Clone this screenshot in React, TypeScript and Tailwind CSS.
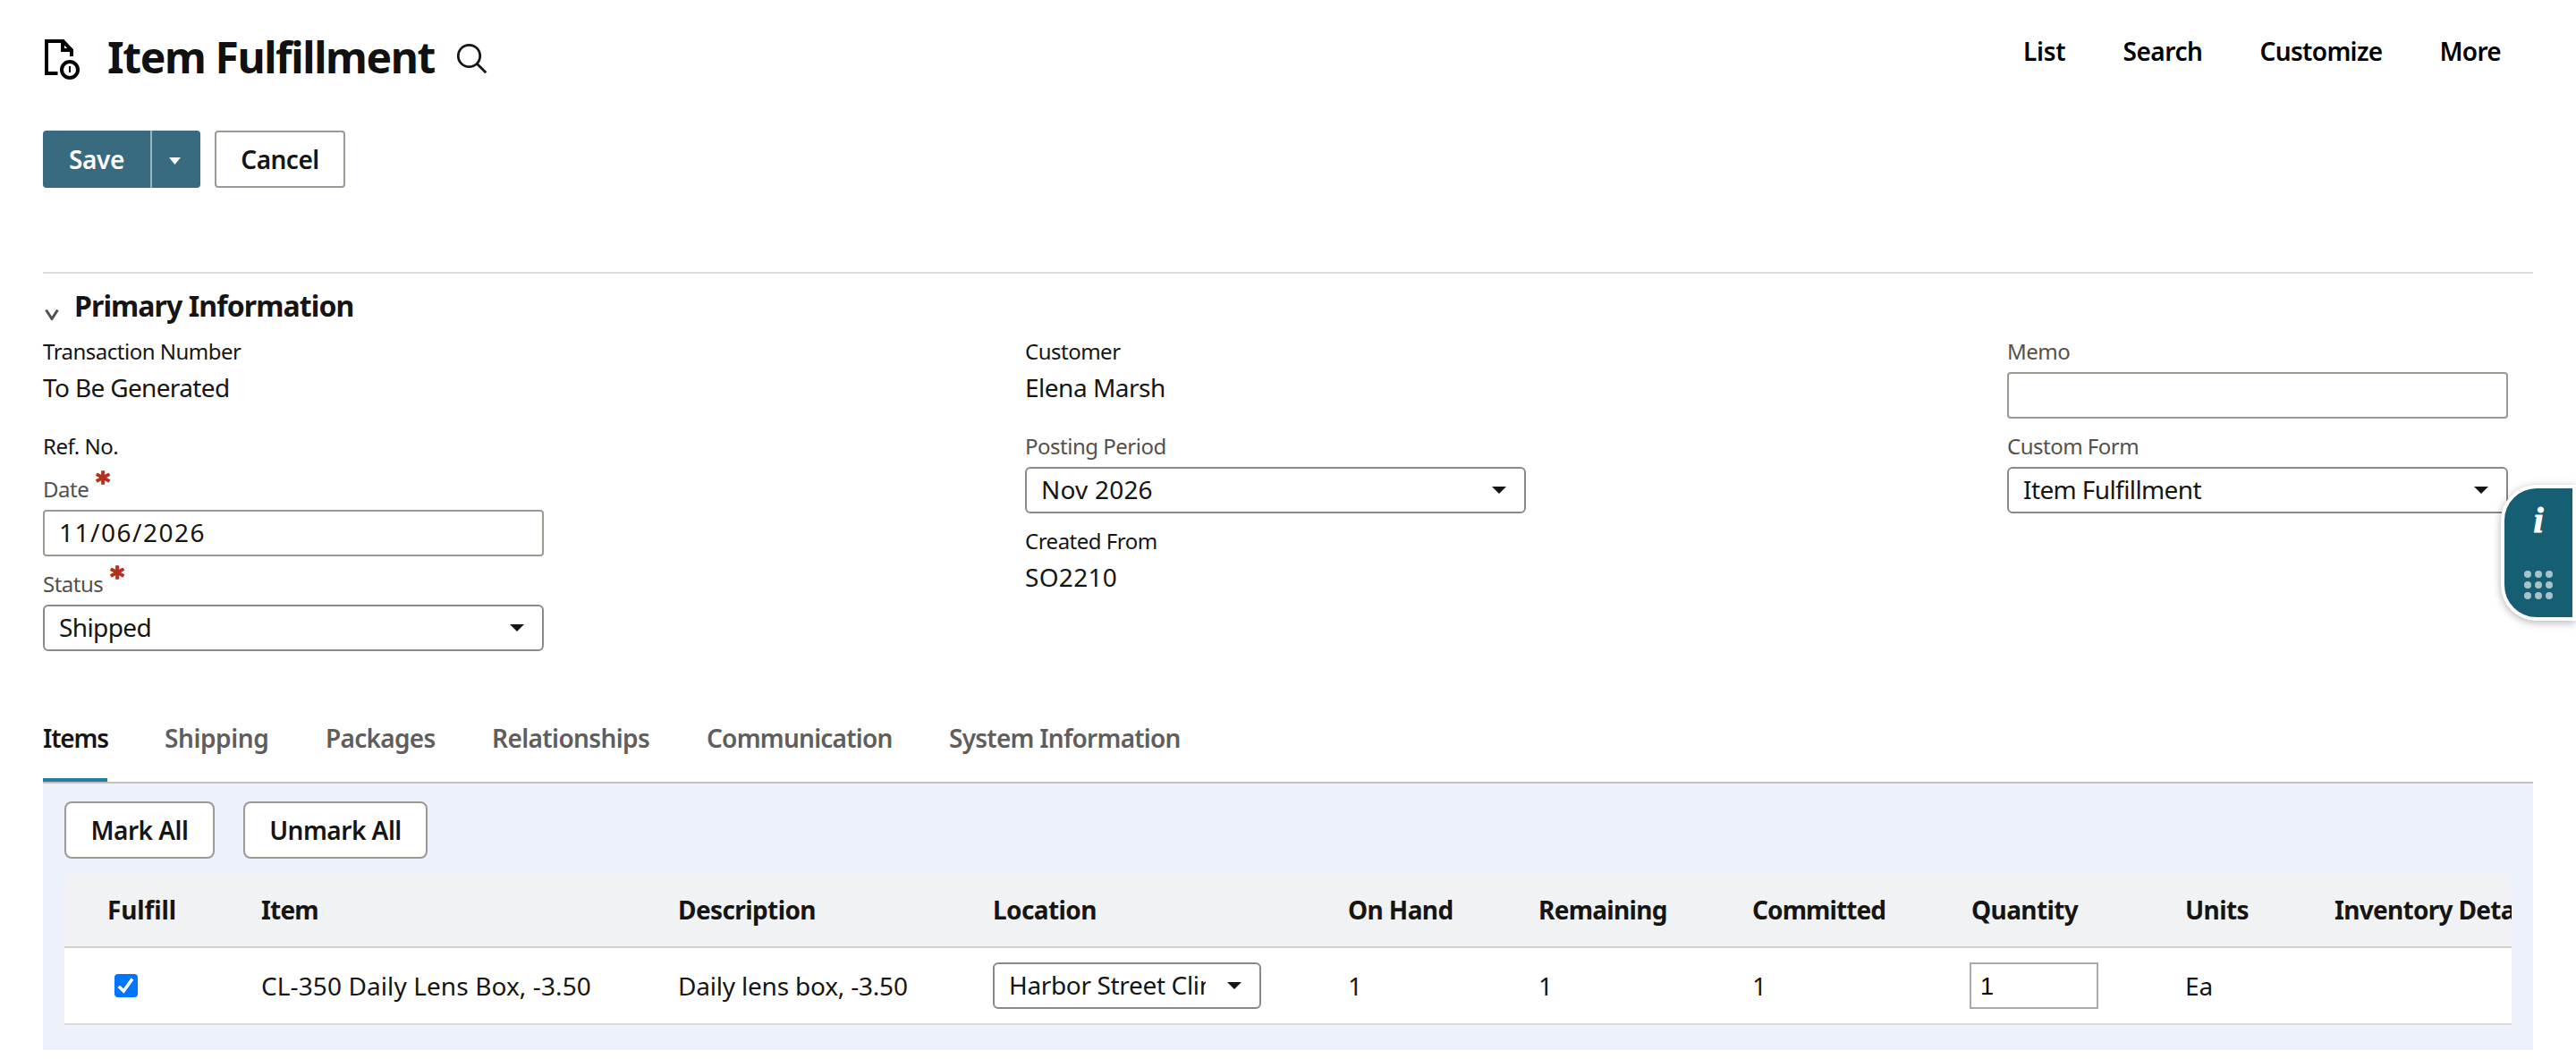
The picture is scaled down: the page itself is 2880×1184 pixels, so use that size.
import type { ReactNode } from "react";
import clsx from "clsx";

const NAV = [
  { label: "List", tracking: "tracking-[-0.2px]" },
  { label: "Search", tracking: "tracking-[-0.45px]" },
  { label: "Customize", tracking: "tracking-[-0.65px]" },
  { label: "More", tracking: "tracking-[-0.7px]" },
];

const TABS = [
  { label: "Items", style: "w-[72px] tracking-[-1.2px]" },
  { label: "Shipping", style: "w-[116px] tracking-[-0.4px]" },
  { label: "Packages", style: "w-[122px] tracking-[-0.7px]" },
  { label: "Relationships", style: "w-[176px] tracking-[-0.6px]" },
  { label: "Communication", style: "w-[207px] tracking-[-0.75px]" },
  { label: "System Information", style: "w-[260px] tracking-[-0.75px]" },
];

const COLUMNS = [
  { label: "Fulfill", tracking: "tracking-[-0.1px]" },
  { label: "Item", tracking: "tracking-[-0.8px]" },
  { label: "Description", tracking: "tracking-[-0.6px]" },
  { label: "Location", tracking: "tracking-[-0.6px]" },
  { label: "On Hand", tracking: "tracking-[-0.6px]" },
  { label: "Remaining", tracking: "tracking-[-0.7px]" },
  { label: "Committed", tracking: "tracking-[-0.9px]" },
  { label: "Quantity", tracking: "tracking-[-0.6px]" },
  { label: "Units", tracking: "tracking-[-0.6px]" },
  { label: "Inventory Detail", tracking: "tracking-[-0.7px]" },
];

const GRID =
  "grid grid-cols-[172px_466px_352px_397px_213px_239px_245px_239px_167px_300px] items-center pl-12";

function Caret({ className }: { className?: string }) {
  return (
    <svg viewBox="0 0 16 8" className={clsx("h-2 w-4 flex-none fill-current", className)}>
      <path d="M0 0h16L8 8z" />
    </svg>
  );
}

function RecordIcon() {
  return (
    <svg width="42" height="48" viewBox="0 0 42 48" fill="none" stroke="#000" strokeWidth="4">
      <path d="M16.500 40H4V4h18.500l9.500 10v7" />
      <path d="M22 4v10h11" />
      <circle cx="30" cy="36" r="9" />
      <path d="M30 32v7" strokeWidth="2" />
    </svg>
  );
}

function SearchIcon() {
  return (
    <svg width="36" height="36" viewBox="0 0 36 36" fill="none" stroke="#161513" strokeWidth="2.8">
      <circle cx="15.5" cy="15.5" r="12.2" />
      <path d="M24 24l10.3 10.3" />
    </svg>
  );
}

function Required() {
  return (
    <span className="-mt-2 ml-2 font-['DejaVu_Sans'] text-[30px] font-bold leading-8 tracking-normal text-[#b5301c] [-webkit-text-stroke:1.4px_#b5301c]">
      *
    </span>
  );
}

type FieldProps = { label: string; editable?: boolean; required?: boolean; children?: ReactNode };

function Field({ label, editable, required, children }: FieldProps) {
  return (
    <div className={children ? "h-[106px]" : "h-12"}>
      <div
        className={clsx(
          "flex h-8 text-2xl leading-8 tracking-[-0.5px]",
          editable ? "text-[#54504a]" : "text-[#161513]",
        )}
      >
        {label}
        {required && <Required />}
      </div>
      {children}
    </div>
  );
}

function Value({ children, tracking }: { children: ReactNode; tracking?: string }) {
  return (
    <div className={clsx("mt-1 text-[28px] leading-10", tracking ?? "tracking-[-0.65px]")}>{children}</div>
  );
}

function Input({ value, className }: { value?: string; className?: string }) {
  return (
    <div
      className={clsx(
        "mt-[7px] h-[52px] w-[560px] rounded-[4px] border-2 border-[#9e9892] bg-white pl-4 text-[28px] leading-[46px]",
        className,
      )}
    >
      {value}
    </div>
  );
}

function Select({ value, tracking }: { value: string; tracking?: string }) {
  return (
    <div className="mt-[7px] flex h-[52px] w-[560px] justify-between rounded-[6px] border-2 border-[#8a8a8a] bg-white pl-4 pr-5">
      <span className={clsx("text-[28px] leading-[46px]", tracking ?? "tracking-[-0.6px]")}>{value}</span>
      <Caret className="mt-5" />
    </div>
  );
}

function Button({ label, className }: { label: string; className: string }) {
  return (
    <div
      className={clsx(
        "flex h-16 items-center justify-center border-2 border-[#9e9892] bg-white text-[28px] font-semibold leading-10 tracking-[-0.5px]",
        className,
      )}
    >
      {label}
    </div>
  );
}

function Header() {
  return (
    <div className="flex h-14 items-start mt-[35px]">
      <div className="mt-[7px]">
        <RecordIcon />
      </div>
      <h1 className="ml-[30px] mt-px w-[389px] whitespace-nowrap text-5xl font-bold leading-[56px] tracking-[-1.4px] text-[#111]">
        Item Fulfillment
      </h1>
      <div className="mt-3">
        <SearchIcon />
      </div>
      <div className="flex-1" />
      <div className="mr-9 mt-0.5 flex gap-16 text-[28px] font-semibold leading-10 text-black">
        {NAV.map((n) => (
          <span key={n.label} className={n.tracking}>
            {n.label}
          </span>
        ))}
      </div>
    </div>
  );
}

function Actions() {
  return (
    <div className="mt-[55px] flex">
      <div className="flex h-16 w-44 overflow-hidden rounded-[4px] bg-[#386a80] text-white">
        <div className="flex w-[122px] items-center justify-center border-r-2 border-[#9bb4bf] text-[28px] font-semibold leading-10 tracking-[-0.4px]">
          Save
        </div>
        <div className="flex flex-1 items-center justify-center">
          <svg viewBox="0 0 13 8" className="ml-[-3px] mt-1 h-2 w-[13px] fill-current">
            <path d="M0 0h13L6.500 8z" />
          </svg>
        </div>
      </div>
      <Button label="Cancel" className="ml-4 w-[146px] rounded-[4px]" />
    </div>
  );
}

function PrimaryInformation() {
  return (
    <section className="mt-[94px] border-t-2 border-[#dfdbd7] pt-4">
      <div className="flex h-10 items-start">
        <svg
          width="16"
          height="12"
          viewBox="0 0 16 12"
          fill="none"
          stroke="#55524e"
          strokeWidth="3"
          className="ml-0.5 mt-6"
        >
          <path d="M1.500 0.500L8 10.500L14.500 0.500" />
        </svg>
        <h2 className="ml-[17px] text-[32px] font-bold leading-10 tracking-[-0.9px]">Primary Information</h2>
      </div>
      <div className="mt-[15px] flex h-[425px]">
        <div className="w-[1098px]">
          <Field label="Transaction Number">
            <Value>To Be Generated</Value>
          </Field>
          <Field label="Ref. No." />
          <Field label="Date" editable required>
            <Input value="11/06/2026" className="tracking-[1.5px]" />
          </Field>
          <Field label="Status" editable required>
            <Select value="Shipped" />
          </Field>
        </div>
        <div className="w-[1098px]">
          <Field label="Customer">
            <Value tracking="tracking-[-0.5px]">Elena Marsh</Value>
          </Field>
          <Field label="Posting Period" editable>
            <Select value="Nov 2026" tracking="tracking-[0.2px]" />
          </Field>
          <Field label="Created From">
            <Value tracking="tracking-[0.3px]">SO2210</Value>
          </Field>
        </div>
        <div className="w-[560px]">
          <Field label="Memo" editable>
            <Input />
          </Field>
          <Field label="Custom Form" editable>
            <Select value="Item Fulfillment" />
          </Field>
        </div>
      </div>
    </section>
  );
}

function Tabs() {
  return (
    <div className="flex h-[74px] gap-16 border-b-2 border-[#c5c0bb] text-[28px] font-semibold leading-10">
      {TABS.map((t, i) => (
        <div
          key={t.label}
          className={clsx(
            "h-[72px] whitespace-nowrap pt-[3px]",
            t.style,
            i === 0 ? "border-b-4 border-[#227f9e] text-[#161513]" : "text-[#5f5e5c]",
          )}
        >
          {t.label}
        </div>
      ))}
    </div>
  );
}

function ItemsPanel() {
  return (
    <div className="h-[298px] bg-[#edf1fc] px-6 pt-5">
      <div className="flex gap-8">
        <Button label="Mark All" className="w-[168px] rounded-lg" />
        <Button label="Unmark All" className="w-[206px] rounded-lg" />
      </div>
      <div className="mt-[18px] overflow-hidden text-[28px] leading-10">
        <div className={clsx(GRID, "h-[82px] border-b-2 border-[#d4d1cd] bg-[#f1f2f4] pb-0.5 font-bold")}>
          {COLUMNS.map((c) => (
            <span key={c.label} className={clsx("whitespace-nowrap", c.tracking)}>
              {c.label}
            </span>
          ))}
        </div>
        <div className={clsx(GRID, "h-[86px] border-b-2 border-[#dedad6] bg-white")}>
          <div className="ml-2 flex h-[26px] w-[26px] items-center justify-center rounded-[4px] bg-[#0075ff]">
            <svg width="20" height="20" viewBox="0 0 20 20" fill="none" stroke="#fff" strokeWidth="3.600">
              <path d="M1.800 10.700L7.200 16L17 2.500" />
            </svg>
          </div>
          <span className="tracking-[0.1px]">CL-350 Daily Lens Box, -3.50</span>
          <span className="tracking-[-0.2px]">Daily lens box, -3.50</span>
          <div className="flex h-[52px] w-[300px] rounded-[6px] border-2 border-[#8a8a8a] pl-4">
            <span className="w-[220px] overflow-hidden whitespace-nowrap leading-[47px] tracking-[-0.35px]">
              Harbor Street Clinic
            </span>
            <Caret className="ml-6 mt-5" />
          </div>
          <span>1</span>
          <span>1</span>
          <span>1</span>
          <div className="-ml-0.5 h-[52px] w-36 border-2 border-[#aaa] pl-2.5 font-['Liberation_Sans'] text-[27px] leading-[50px] text-black">
            1
          </div>
          <span>Ea</span>
        </div>
      </div>
    </div>
  );
}

/** Floating help handle docked to the right edge. */
function HelpDock() {
  return (
    <div className="absolute right-0 top-[542px] flex h-[152px] w-[84px] flex-col items-center rounded-l-[40px] border-4 border-white bg-[#165e72] shadow-[0_2px_10px_rgba(0,0,0,0.3)]">
      <span className="mt-4 h-10 font-['Liberation_Serif'] text-[40px] font-bold italic leading-10 text-white [-webkit-text-stroke:1px_white]">
        i
      </span>
      <svg width="32" height="32" viewBox="0 0 32 32" fill="#a9c2cb" className="mt-9">
        {[4, 16, 28].map((y) => [4, 16, 28].map((x) => <circle key={`${x}-${y}`} cx={x} cy={y} r="4" />))}
      </svg>
    </div>
  );
}

export default function App() {
  return (
    <div className="relative flow-root h-[1184px] w-[2880px] overflow-hidden bg-white px-12 font-['Noto_Sans',sans-serif] text-[#161513]">
      <Header />
      <Actions />
      <PrimaryInformation />
      <Tabs />
      <ItemsPanel />
      <HelpDock />
    </div>
  );
}
